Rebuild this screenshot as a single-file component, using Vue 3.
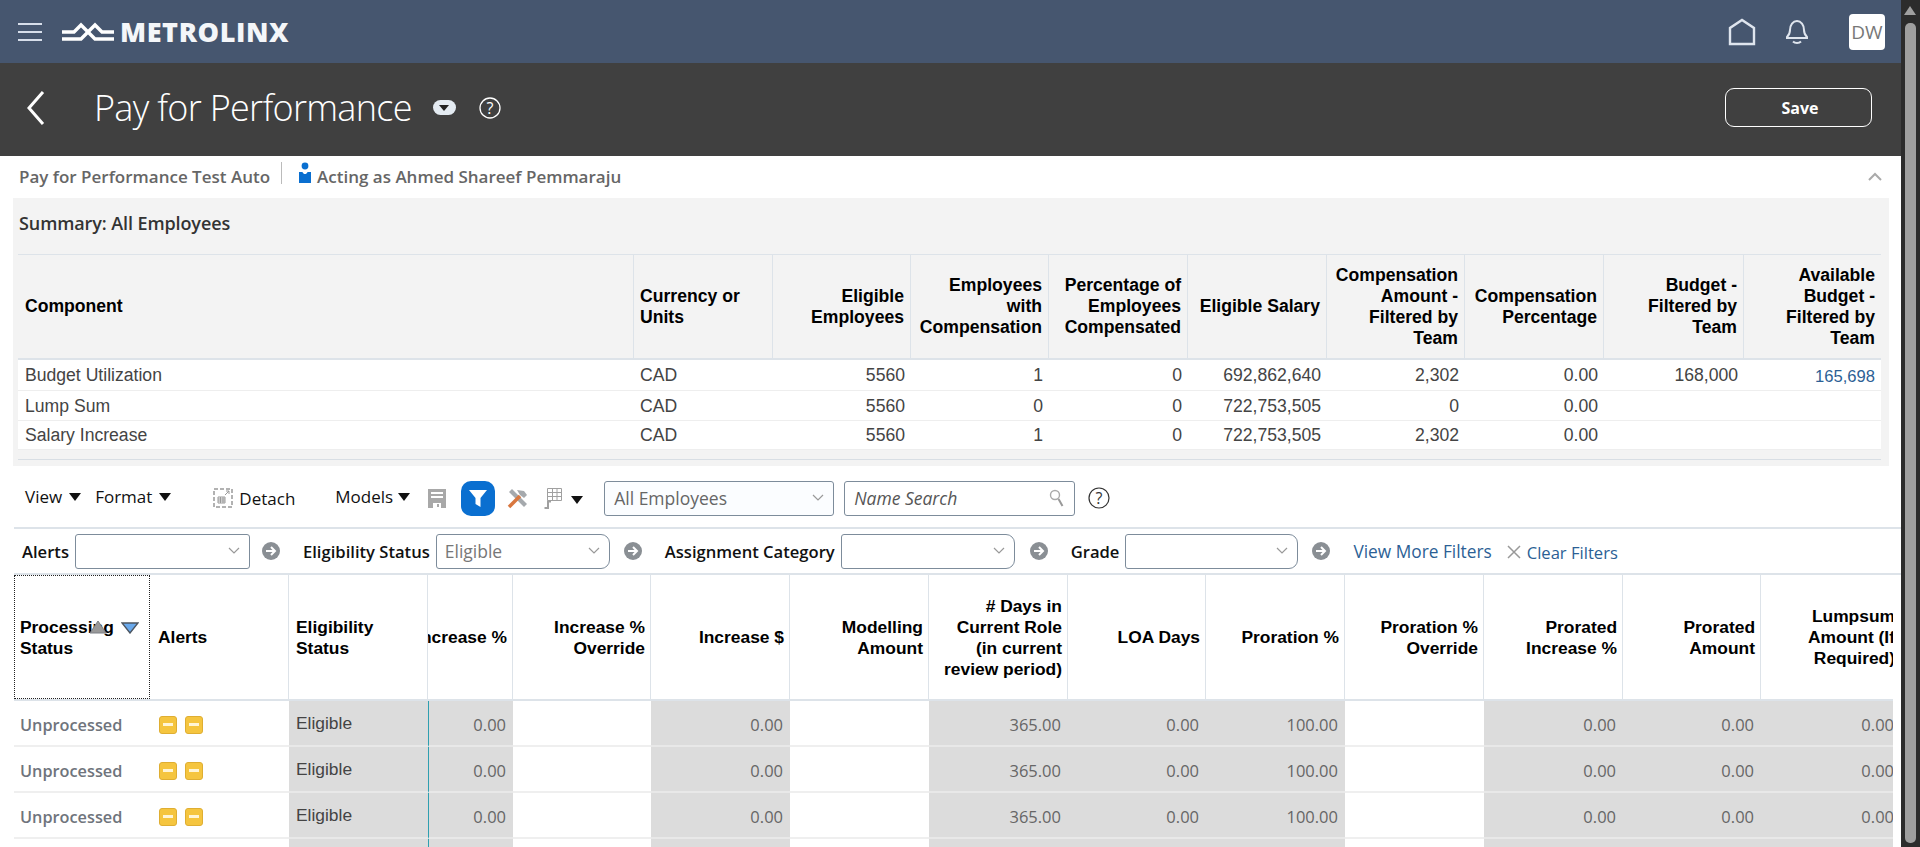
<script setup>
const summaryHead = [
  { t: "Component", left: true },
  { t: "Currency or Units", left: true },
  { t: "Eligible Employees" },
  { t: "Employees with Compensation" },
  { t: "Percentage of Employees Compensated" },
  { t: "Eligible Salary" },
  { t: "Compensation Amount - Filtered by Team" },
  { t: "Compensation Percentage" },
  { t: "Budget - Filtered by Team" },
  { t: "Available Budget - Filtered by Team" }
]
const summaryRows = [
  ["Budget Utilization", "CAD", "5560", "1", "0", "692,862,640", "2,302", "0.00", "168,000", "165,698"],
  ["Lump Sum", "CAD", "5560", "0", "0", "722,753,505", "0", "0.00", "", ""],
  ["Salary Increase", "CAD", "5560", "1", "0", "722,753,505", "2,302", "0.00", "", ""]
]

const gridCols = [
  { t: "Increase %", grey: true, v: "0.00", frozen: true },
  { t: "Increase % Override" },
  { t: "Increase $", grey: true, v: "0.00" },
  { t: "Modelling Amount" },
  { t: "# Days in Current Role (in current review period)", grey: true, v: "365.00" },
  { t: "LOA Days", grey: true, v: "0.00" },
  { t: "Proration %", grey: true, v: "100.00" },
  { t: "Proration % Override" },
  { t: "Prorated Increase %", grey: true, v: "0.00" },
  { t: "Prorated Amount", grey: true, v: "0.00" },
  { t: "Lumpsum Amount (If Required)", grey: true, v: "0.00" }
]
const rows = [1, 2, 3, 4]
const filters = [
  { label: "Alerts", value: "", w: 175, gap: 12, ml: 0 },
  { label: "Eligibility Status", value: "Eligible", w: 174, gap: 14, ml: 23, cut: true },
  { label: "Assignment Category", value: "", w: 174, gap: 15, ml: 23, cut: true },
  { label: "Grade", value: "", w: 173, gap: 14, ml: 23, cut: true }
]
</script>

<template>
  <div class="page">
    <div class="main">
      <header class="topbar">
        <div class="burger"><i></i><i></i><i></i></div>
        <svg class="logo-mark" viewBox="0 0 52 20" width="52" height="20">
          <path d="M0 10H12L19 3 33 17H52M52 10H40L33 3 19 17H0" fill="none" stroke="#fff" stroke-width="3.400"/>
        </svg>
        <span class="logo-text">METROLINX</span>
        <div class="top-right">
          <svg width="28" height="28" viewBox="0 0 28 28"><path d="M2 26V10L14 2l12 8v16z" fill="none" stroke="#dfe5ee" stroke-width="2.400"/></svg>
          <svg class="bell" width="24" height="26" viewBox="0 0 24 26"><path d="M2 18c2-2 3-3 3-7 0-5 3-9 7-9s7 4 7 9c0 4 1 5 3 7v1H2zM8 22.500c2 2 6 2 8 0" fill="none" stroke="#dfe5ee" stroke-width="2"/></svg>
          <div class="avatar">DW</div>
        </div>
      </header>

      <div class="titlebar">
        <svg class="back" width="20" height="36" viewBox="0 0 20 36"><path d="M17 2L3 18l14 16" fill="none" stroke="#fff" stroke-width="3"/></svg>
        <h1>Pay for Performance</h1>
        <span class="pill"><b></b></span>
        <svg class="help" width="22" height="22" viewBox="0 0 22 22"><circle cx="11" cy="11" r="10" fill="none" stroke="#fff" stroke-width="1.300"/><text x="11" y="16.500" text-anchor="middle" fill="#fff" font-size="16" font-family="Open Sans, sans-serif">?</text></svg>
        <button class="save">Save</button>
      </div>

      <div class="crumbs">
        <span>Pay for Performance Test Auto</span>
        <i class="sep"></i>
        <svg width="14" height="22" viewBox="0 0 14 22"><circle cx="7" cy="4" r="3.400" fill="#0a6fd0"/><path d="M1 10h3.500c.5 1.500 1.500 2 2.500 2s2-.5 2.500-2H13v11H1z" fill="#0a6fd0"/></svg>
        <span>Acting as Ahmed Shareef Pemmaraju</span>
        <svg class="collapse" width="14" height="9" viewBox="0 0 14 9"><path d="M1 8l6-6 6 6" fill="none" stroke="#aaa" stroke-width="2"/></svg>
      </div>

      <section class="summary">
        <h2>Summary: All Employees</h2>
        <div class="s-table">
          <div class="s-row s-head">
            <div v-for="h in summaryHead" :key="h.t" class="s-cell" :class="{ left: h.left }"><span>{{ h.t }}</span></div>
          </div>
          <div v-for="r in summaryRows" :key="r[0]" class="s-row s-body">
            <div v-for="(c, i) in r" :key="i" class="s-cell" :class="{ left: i < 2, link: i === 9 }"><span>{{ c }}</span></div>
          </div>
        </div>
      </section>

      <div class="toolbar">
        <span class="menu m-view">View <b class="tri"></b></span>
        <span class="menu m-format">Format <b class="tri"></b></span>
        <svg class="ico-detach" width="20" height="20" viewBox="0 0 20 20"><rect x="1" y="1" width="18" height="18" fill="none" stroke="#999" stroke-width="1.500" stroke-dasharray="4 2"/><path d="M5 9h7v6H5zM5 11h7M5 13h7M7.500 9v6M10 9v6" fill="none" stroke="#999"/><path d="M12 7l4-4M13 3h3v3" fill="none" stroke="#999"/></svg>
        <span class="detach">Detach</span>
        <span class="menu m-models">Models <b class="tri"></b></span>
        <svg class="ico-save" width="18" height="20" viewBox="0 0 18 20"><path d="M0 1h18v19H0z" fill="#a8a8a8"/><path d="M3 4h12v2H3zM3 8h12v2H3zM5 15h8v5H5z" fill="#fff"/><path d="M9 16h2v3H9z" fill="#a8a8a8"/></svg>
        <button class="filter-btn"><svg width="20" height="20" viewBox="0 0 20 20"><path d="M1 2h18l-6.500 8v9l-5-3v-6z" fill="#fff"/></svg></button>
        <svg class="ico-tools" width="21" height="21" viewBox="0 0 21 21"><path d="M2 4l3-3 15 15-3 3z" fill="#a5a9ad"/><path d="M10 2l7 1 3 4-3 3-4-3z" fill="#a5a9ad"/><path d="M2 19L13 8" stroke="#d9773f" stroke-width="3.500"/></svg>
        <svg class="ico-grid" width="20" height="22" viewBox="0 0 20 22"><path d="M4.500 1.500h14v12h-14zM4.500 5.500h14M4.500 9.500h14M9.500 1.500v12M14 1.500v12" fill="none" stroke="#a0a0a0"/><path d="M1.500 21h3.500v-6.500h3" fill="none" stroke="#a0a0a0" stroke-width="2"/></svg>
        <b class="tri tri-grid"></b>
        <div class="select all-emp"><span>All Employees</span><svg class="chev" width="12" height="8" viewBox="0 0 12 8"><path d="M1 1l5 5 5-5" fill="none" stroke="#999" stroke-width="1.200"/></svg></div>
        <div class="search"><em>Name Search</em><svg width="16" height="18" viewBox="0 0 16 18"><circle cx="6" cy="6" r="4.500" fill="none" stroke="#aaa" stroke-width="1.400"/><path d="M9.500 10l4 7" stroke="#999" stroke-width="2"/></svg></div>
        <svg class="tool-help" width="22" height="22" viewBox="0 0 22 22"><circle cx="11" cy="11" r="10" fill="none" stroke="#333" stroke-width="1.200"/><text x="11" y="16.500" text-anchor="middle" fill="#333" font-size="16" font-family="Open Sans, sans-serif">?</text></svg>
      </div>

      <div class="filters">
        <template v-for="f in filters" :key="f.label">
          <label :style="{ marginLeft: f.ml + 'px' }">{{ f.label }}</label>
          <div class="f-select" :class="{ cut: f.cut }" :style="{ width: f.w + 'px' }">
            <span>{{ f.value }}</span>
            <svg class="chev" width="12" height="8" viewBox="0 0 12 8"><path d="M1 1l5 5 5-5" fill="none" stroke="#999" stroke-width="1.200"/></svg>
          </div>
          <svg class="go" :style="{ marginLeft: f.gap + 'px' }" width="18" height="18" viewBox="0 0 18 18"><circle cx="9" cy="9" r="9" fill="#8a8f94"/><path d="M4 9h9M9 5l4 4-4 4" fill="none" stroke="#fff" stroke-width="2"/></svg>
        </template>
        <a class="more">View More Filters</a>
        <svg class="clear-x" width="14" height="14" viewBox="0 0 14 14"><path d="M1 1l12 12M13 1L1 13" stroke="#999" stroke-width="1.500"/></svg>
        <a class="clear">Clear Filters</a>
      </div>

      <div class="grid-wrap">
        <div class="g-row g-head">
          <div class="g-cell g-first proc">
            <span>Processing Status</span>
            <svg class="sort-up" width="20" height="14" viewBox="0 0 20 14"><path d="M10 1l8 12H2z" fill="#999" stroke="#7a7f84"/></svg>
            <svg class="sort-down" width="18" height="12" viewBox="0 0 18 12"><path d="M1 1h16l-8 10z" fill="#6aa9ec" stroke="#4c5560" stroke-width="1.400"/></svg>
          </div>
          <div class="g-cell g-alerts"><span>Alerts</span></div>
          <div class="g-cell g-elig"><span>Eligibility Status</span></div>
          <div v-for="c in gridCols" :key="c.t" class="g-cell num" :class="{ narrow: c.frozen }"><span>{{ c.t }}</span></div>
        </div>
        <div v-for="r in rows" :key="r" class="g-row g-body">
          <div class="g-cell g-first unproc">Unprocessed</div>
          <div class="g-cell g-alerts"><i class="alert"></i><i class="alert"></i></div>
          <div class="g-cell g-elig grey elig-text">Eligible</div>
          <div v-for="c in gridCols" :key="c.t" class="g-cell num val" :class="{ grey: c.grey, narrow: c.frozen }">{{ c.v }}</div>
        </div>
      </div>
    </div>

    <aside class="scrollbar"><b></b><i></i></aside>
  </div>
</template>

<style scoped>
.page {
  display: flex;
  height: 847px;
  overflow: hidden;
  font-family: "Open Sans", sans-serif;
  background: #fff;
}
.main { width: 1901px; flex: none; overflow: hidden; }
.scrollbar {
  width: 19px;
  background: #2c2c2c;
  position: relative;
}
.scrollbar b {
  position: absolute;
  left: 3px;
  top: 6px;
  border: 6px solid transparent;
  border-top: 0;
  border-bottom: 9px solid #a0a0a0;
}
.scrollbar i {
  position: absolute;
  left: 4px;
  top: 23px;
  width: 11px;
  height: 820px;
  background: #9f9f9f;
  border-radius: 5px;
}

.topbar {
  height: 63px;
  background: #46566f;
  display: flex;
  align-items: center;
  padding-left: 18px;
}
.burger { width: 24px; display: flex; flex-direction: column; gap: 6px; }
.burger i { height: 2px; background: #d7deea; }
.logo-mark { margin-left: 20px; margin-top: 1px; }
.logo-text {
  margin-left: 6px;
  font-size: 27px;
  font-weight: 800;
  color: #f4f6f9;
  letter-spacing: 0.6px;
}
.top-right { margin-left: auto; display: flex; align-items: center; padding-right: 16px; }
.bell { margin-left: 29px; }
.avatar {
  margin-left: 40px;
  width: 36px;
  height: 36px;
  border-radius: 4px;
  background: #fff;
  color: #777;
  font-size: 19px;
  display: flex;
  align-items: center;
  justify-content: center;
}

.titlebar {
  height: 93px;
  box-sizing: border-box;
  padding-bottom: 4px;
  background: #404040;
  display: flex;
  align-items: center;
  padding-left: 26px;
  color: #fff;
}
h1 {
  margin: 0 0 0 48px;
  font-size: 36px;
  font-weight: 300;
  letter-spacing: -0.7px;
  white-space: nowrap;
}
.pill {
  margin-left: 21px;
  width: 23px;
  height: 15px;
  border-radius: 8px;
  background: #e4ebf2;
  display: flex;
  align-items: center;
  justify-content: center;
}
.pill b {
  border: 5px solid transparent;
  border-top: 6px solid #222;
  border-bottom: 0;
}
.help { margin-left: 23px; }
.save {
  margin-left: auto;
  margin-right: 29px;
  width: 147px;
  height: 39px;
  padding: 0 0 0 3px;
  border: 1px solid #fff;
  border-radius: 9px;
  background: transparent;
  color: #fff;
  font: 700 16px "Open Sans", sans-serif;
}

.crumbs {
  height: 42px;
  box-sizing: border-box;
  padding-bottom: 2px;
  display: flex;
  align-items: center;
  padding-left: 19px;
  color: #666;
  font-size: 17px;
  font-weight: 600;
}
.sep { width: 1px; height: 22px; background: #bbb; margin: -6px 16px 0 11px; }
.crumbs svg:not(.collapse) { margin: -6px 5px 0 0; }
.collapse { margin-left: auto; margin-right: 19px; }

.summary {
  margin: 0 12px 0 13px;
  height: 268px;
  background: #f3f3f3;
  padding: 0 8px 0 5px;
}
h2 {
  margin: 0;
  height: 56px;
  display: flex;
  align-items: center;
  font-size: 18px;
  font-weight: 600;
  color: #333;
  padding: 0 0 6px 1px;
  box-sizing: border-box;
  letter-spacing: -0.1px;
}
.s-table {
  border-top: 1px solid #dde3e9;
  border-bottom: 1px solid #d8dee4;
  padding-bottom: 9px;
  font-family: "Liberation Sans", Arial, sans-serif;
  font-size: 17.6px;
}
.s-row {
  display: grid;
  box-sizing: border-box;
  grid-template-columns: 616px 139px 138px 138px 139px 139px 138px 139px 140px 137px;
}
.s-head { height: 105px; border-bottom: 2px solid #dde3e9; font-weight: 700; color: #000; line-height: 21px; }
.s-head .s-cell { border-right: 1px solid #dde3e9; }
.s-head .s-cell:last-child { border-right: 0; }
.s-cell {
  display: flex;
  align-items: center;
  justify-content: flex-end;
  text-align: right;
  padding: 0 6px;
}
.s-cell.left { justify-content: flex-start; text-align: left; }
.s-cell.left:first-child { padding-left: 7px; }
.s-body { background: #fff; color: #444; height: 29px; border-bottom: 1px solid #eee; padding-top: 1px; }
.s-body:nth-child(2) { height: 31px; padding-top: 0; }
.s-body:nth-child(3) { height: 30px; }
.link { color: #2c5f95; padding-top: 4px; font-size: 16.6px; }

.toolbar {
  height: 63px;
  margin-left: 14px;
  padding-top: 3px;
  border-bottom: 2px solid #dde3e9;
  display: flex;
  align-items: center;
  color: #111;
  font-size: 17px;
  box-sizing: border-box;
}
.menu { white-space: nowrap; display: inline-flex; align-items: center; gap: 7px; margin-top: -3px; }
.m-view { margin-left: 11px; }
.m-format { margin-left: 14px; }
.m-models { margin-left: 40px; gap: 5px; }
.tri {
  display: inline-block;
  border: 6px solid transparent;
  border-top: 8px solid #111;
  border-bottom: 0;
}
.ico-detach { margin-left: 42px; }
.detach { margin-left: 6px; font-weight: 500; }
.ico-save { margin-left: 18px; }
.filter-btn {
  margin-left: 15px;
  width: 34px;
  height: 35px;
  border: 0;
  border-radius: 10px;
  background: #0a6fd0;
  display: flex;
  align-items: center;
  justify-content: center;
  padding: 0;
}
.ico-tools { margin-left: 12px; }
.ico-grid { margin-left: 15px; }
.tri-grid { margin-left: 8px; margin-top: 3px; }
.select, .search {
  height: 35px;
  box-sizing: border-box;
  border: 1px solid #7d8c9b;
  border-radius: 3px;
  display: flex;
  align-items: center;
  justify-content: space-between;
  padding: 0 9px;
  color: #666;
  font-size: 17.5px;
  background: #fbfdff;
}
.all-emp { margin-left: 21px; width: 230px; }
.search { margin-left: 10px; width: 231px; background: #fff; }
.search em { color: #555; }
.tool-help { margin-left: 13px; }

.filters {
  height: 46px;
  margin-left: 14px;
  border-bottom: 2px solid #dde3e9;
  box-sizing: border-box;
  display: flex;
  align-items: center;
  font-size: 16.6px;
  color: #111;
  font-weight: 600;
  padding-left: 8px;
}
.filters label { white-space: nowrap; margin-right: 6px; }
.f-select {
  height: 35px;
  box-sizing: border-box;
  border: 1px solid #7d8c9b;
  border-radius: 3px;
  display: flex;
  align-items: center;
  justify-content: space-between;
  padding: 0 9px 0 8px;
  color: #777;
  font-size: 17.5px;
  font-weight: 400;
  flex: none;
}
.f-select.cut { border-radius: 3px 9px 9px 3px; }
.go { flex: none; }
.more { margin-left: 23px; color: #2c5f95; font-size: 17.3px; font-weight: 400; white-space: nowrap; }
.clear-x { margin-left: 15px; margin-top: 2px; }
.clear { margin-left: 6px; color: #2c5f95; font-weight: 400; white-space: nowrap; margin-top: 3px; }

.grid-wrap {
  margin-left: 14px;
  width: 1879px;
  overflow: hidden;
  font-family: "Liberation Sans", Arial, sans-serif;
  font-size: 17.4px;
}
.g-row {
  display: grid;
  grid-template-columns: 136px 139px 139px 85px 138px 139px 139px 139px 138px 139px 139px 139px 138px 140px;
  width: 1909px;
}
.g-head { height: 126px; border-bottom: 2px solid #dde3e9; box-sizing: border-box; font-weight: 700; color: #000; line-height: 21px; }
.g-head .g-cell { border-right: 1px solid #dde3e9; box-sizing: border-box; padding-top: 1px; }
.g-head .num { padding-right: 5px; }
.g-cell {
  display: flex;
  align-items: center;
  padding: 0 7px;
  overflow: hidden;
  min-width: 0;
}
.g-first { padding-left: 6px; }
.proc {
  position: relative;
  border: 1px dotted #222 !important;
  padding-left: 5px;
}
.sort-up { position: absolute; left: 73px; top: 44px; }
.sort-down { position: absolute; left: 106px; top: 46px; }
.g-alerts { padding-left: 8px; gap: 8px; }
.g-body .g-alerts { padding: 3px 0 0 9px; }
.g-elig { padding-left: 7px; }
.num { justify-content: flex-end; text-align: right; }
.narrow { white-space: nowrap; border-left: 1px solid #2f9fb0; }
.g-head .narrow { border-left: 0; }
.g-body { height: 46px; border-bottom: 0; }
.g-body .g-cell { border-bottom: 2px solid #efefef; box-sizing: border-box; }
.g-body .grey { background: #dcdcdc; border-bottom-color: #e8e8e8; }
.unproc { font-family: "Open Sans", sans-serif; font-size: 16.3px; color: #6f747c; font-weight: 600; padding-top: 3px; }
.val { color: #666; font-family: "Open Sans", sans-serif; font-size: 16.5px; padding-top: 3px; }
.elig-text { color: #444; align-items: flex-start; padding-top: 12px; }
.alert {
  width: 18px;
  height: 18px;
  box-sizing: border-box;
  border-radius: 3px;
  background: #f5c53f;
  border: 1px solid #dfae32;
  position: relative;
}
.alert::after {
  content: "";
  position: absolute;
  left: 3px;
  right: 3px;
  top: 6px;
  height: 3px;
  background: #fff5d6;
}
</style>

<style>
html, body { margin: 0; overflow: hidden; }
</style>
